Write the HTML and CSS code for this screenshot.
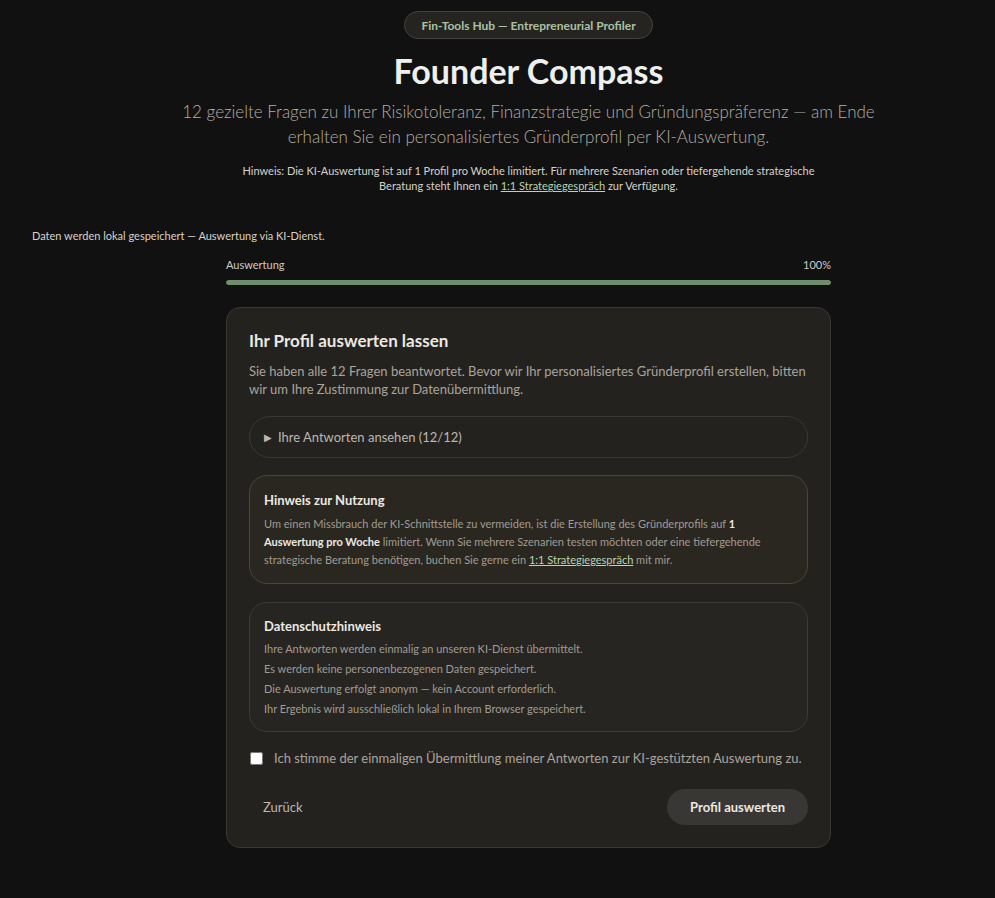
FILE: index.html
```html
<!DOCTYPE html>
<html lang="de">
<head>
<meta charset="utf-8">
<title>Founder Compass</title>
<link rel="stylesheet" href="styles.css">
</head>
<body>
<div class="page">
  <header class="hero">
    <div class="badge">Fin-Tools Hub — Entrepreneurial Profiler</div>
    <h1 class="title">Founder Compass</h1>
    <p class="subtitle">12 gezielte Fragen zu Ihrer Risikotoleranz, Finanzstrategie und Gründungspräferenz — am Ende erhalten Sie ein personalisiertes Gründerprofil per KI-Auswertung.</p>
    <p class="notice">Hinweis: Die KI-Auswertung ist auf 1 Profil pro Woche limitiert. Für mehrere Szenarien oder tiefergehende strategische Beratung steht Ihnen ein <a href="#">1:1 Strategiegespräch</a> zur Verfügung.</p>
  </header>
</div>
<p class="storage">Daten werden lokal gespeichert — Auswertung via KI-Dienst.</p>
<div class="page">
  <main class="wrap">
    <div class="progress-head"><span>Auswertung</span><span>100%</span></div>
    <div class="progress"><div class="progress-fill" style="width:100%"></div></div>
    <section class="card">
      <h2 class="card-title">Ihr Profil auswerten lassen</h2>
      <p class="card-text">Sie haben alle 12 Fragen beantwortet. Bevor wir Ihr personalisiertes Gründerprofil erstellen, bitten wir um Ihre Zustimmung zur Datenübermittlung.</p>
      <details class="answers">
        <summary><span class="tri">▶</span>Ihre Antworten ansehen (12/12)</summary>
      </details>
      <div class="box box-usage">
        <h3 class="box-title">Hinweis zur Nutzung</h3>
        <p class="box-text">Um einen Missbrauch der KI-Schnittstelle zu vermeiden, ist die Erstellung des Gründerprofils auf <strong>1 Auswertung pro Woche</strong> limitiert. Wenn Sie mehrere Szenarien testen möchten oder eine tiefergehende strategische Beratung benötigen, buchen Sie gerne ein <a href="#">1:1 Strategiegespräch</a> mit mir.</p>
      </div>
      <div class="box box-privacy">
        <h3 class="box-title">Datenschutzhinweis</h3>
        <ul class="privacy-list">
          <li>Ihre Antworten werden einmalig an unseren KI-Dienst übermittelt.</li>
          <li>Es werden keine personenbezogenen Daten gespeichert.</li>
          <li>Die Auswertung erfolgt anonym — kein Account erforderlich.</li>
          <li>Ihr Ergebnis wird ausschließlich lokal in Ihrem Browser gespeichert.</li>
        </ul>
      </div>
      <label class="consent"><input type="checkbox" class="check"><span>Ich stimme der einmaligen Übermittlung meiner Antworten zur KI-gestützten Auswertung zu.</span></label>
      <div class="actions">
        <button class="btn-back" type="button">Zurück</button>
        <button class="btn-primary" type="button">Profil auswerten</button>
      </div>
    </section>
  </main>
</div>
</body>
</html>
```
FILE: styles.css
```css
* { box-sizing: border-box; }
html, body { margin: 0; padding: 0; }
body {
  background: #111111;
  color: #e8e4dc;
  font-family: "Lato", "Noto Sans", sans-serif;
}
a { color: #b8d4b0; text-decoration: underline; text-underline-offset: 1px; }

.page { padding-left: 62px; }

.hero {
  display: flex;
  flex-direction: column;
  align-items: center;
  text-align: center;
  padding-top: 11px;
}
.badge {
  height: 28px;
  padding: 0 16px;
  display: flex;
  align-items: center;
  border: 1px solid #44423e;
  border-radius: 14px;
  background: #252421;
  color: #a9c2a2;
  font-size: 12px;
  font-weight: 700;
}
.title {
  margin: 11px 0 0;
  font-size: 34px;
  line-height: 42px;
  font-weight: 700;
  color: #eef0ef;
}
.subtitle {
  margin: 7px 0 0;
  max-width: 720px;
  font-size: 17px;
  line-height: 25px;
  font-weight: 300;
  color: #b4aea5;
}
.notice {
  margin: 14px 0 0;
  max-width: 600px;
  font-size: 11px;
  line-height: 15px;
  color: #d6d2ca;
}
.storage {
  margin: 35px 0 0 32px;
  font-size: 11px;
  line-height: 15px;
  color: #d6d2ca;
}
.wrap {
  width: 605px;
  margin: 15px auto 40px;
}
.progress-head {
  display: flex;
  justify-content: space-between;
  font-size: 11px;
  line-height: 14px;
  color: #d0ccc4;
}
.progress {
  margin-top: 8px;
  height: 5px;
  border-radius: 3px;
  background: #2a2a28;
  overflow: hidden;
}
.progress-fill { height: 100%; background: #6e8e6c; border-radius: 3px; }

.card {
  margin-top: 22px;
  padding: 22px 22px 22px;
  background: #24221f;
  border: 1px solid #3a3834;
  border-radius: 14px;
}
.card-title {
  margin: 0;
  font-size: 17px;
  line-height: 22px;
  font-weight: 700;
  color: #ece8e1;
}
.card-text {
  margin: 10px 0 0;
  font-size: 13px;
  line-height: 18px;
  color: #aaa49b;
  font-weight: 400;
}
.answers {
  margin-top: 18px;
  border: 1px solid #3a3834;
  border-radius: 21px;
}
.answers summary {
  list-style: none;
  height: 40px;
  padding: 0 14px;
  display: flex;
  align-items: center;
  gap: 6px;
  font-size: 13px;
  color: #bdb7ae;
  cursor: pointer;
}
.answers summary::-webkit-details-marker { display: none; }
.tri { font-size: 10px; color: #bdb7ae; }

.box {
  margin-top: 18px;
  padding: 16px 14px 14px;
  border-radius: 18px;
}
.box-usage {
  margin-top: 17px;
  background: #2a2721;
  border: 1px solid #4b4638;
}
.box-privacy {
  background: #262522;
  border: 1px solid #3d3b37;
  padding-top: 15px;
  padding-bottom: 12px;
}
.box-title {
  margin: 0;
  font-size: 13px;
  line-height: 17px;
  font-weight: 700;
  color: #ece8e1;
}
.box-text {
  margin: 6px 0 0;
  font-size: 11px;
  line-height: 18px;
  color: #a19b92;
}
.box-text strong { color: #ece8e1; font-weight: 700; }
.privacy-list {
  margin: 4px 0 0;
  padding: 0;
  list-style: none;
  font-size: 11px;
  line-height: 20px;
  color: #a19b92;
}
.consent {
  margin-top: 18px;
  display: flex;
  align-items: center;
  gap: 11px;
  font-size: 13px;
  color: #aaa49b;
}
.check {
  margin: 0 0 0 1px;
  width: 13px;
  height: 13px;
}
.actions {
  margin-top: 23px;
  display: flex;
  justify-content: space-between;
  align-items: center;
}
.btn-back {
  background: none;
  border: none;
  padding: 0 14px;
  font-family: inherit;
  font-size: 13px;
  color: #bdb7ae;
}
.btn-primary {
  height: 36px;
  padding: 0 23px;
  border: none;
  border-radius: 18px;
  background: #393735;
  color: #ece8e1;
  font-family: inherit;
  font-size: 13px;
  font-weight: 700;
}
```
